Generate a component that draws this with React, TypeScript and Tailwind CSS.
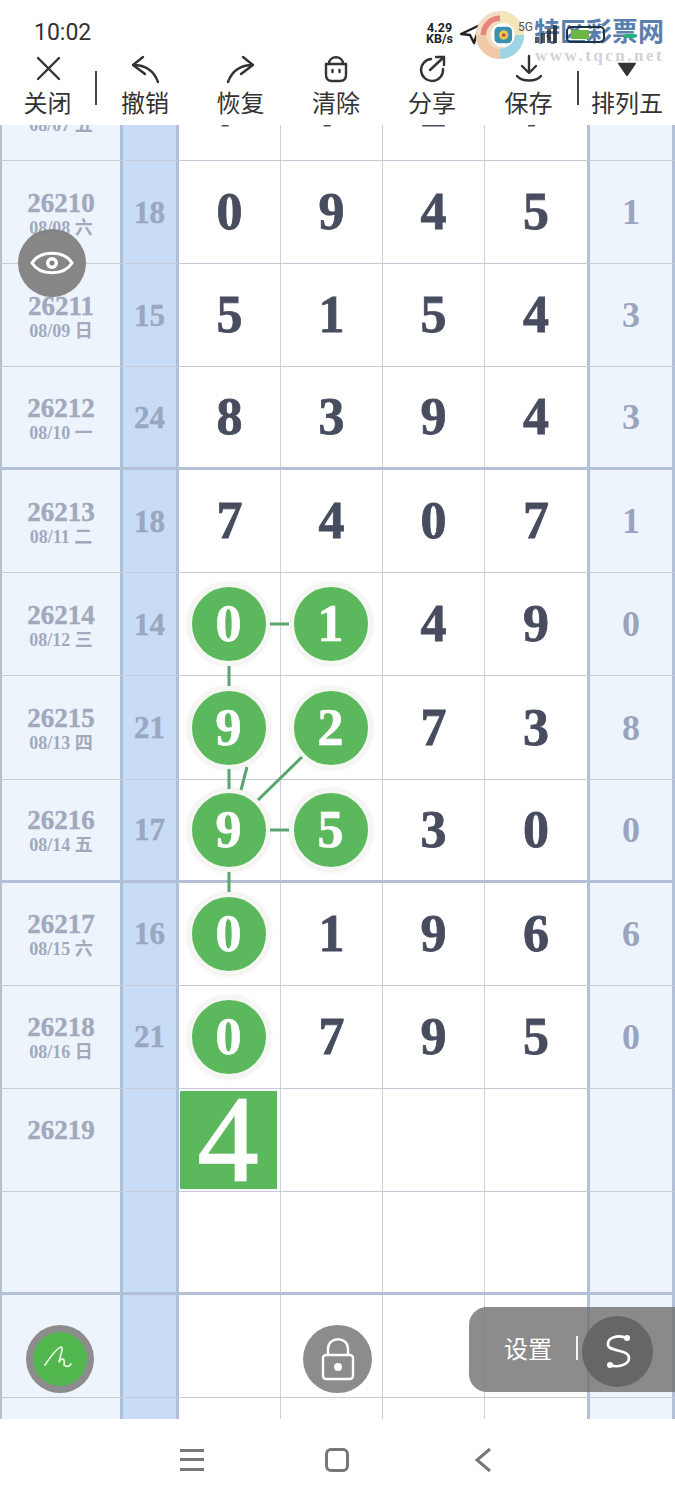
import React from "react";

const serif = "font-['Liberation_Serif','Noto_Sans_CJK_SC',serif]";

type Row = { id: string; date: string; sum: string; d: string[]; r: string; thick?: boolean; on?: number[] };
const rows: Row[] = [
  { id: "26209", date: "08/07 五", sum: "", d: ["7", "7", "2", "7"], r: "" },
  { id: "26210", date: "08/08 六", sum: "18", d: ["0", "9", "4", "5"], r: "1" },
  { id: "26211", date: "08/09 日", sum: "15", d: ["5", "1", "5", "4"], r: "3" },
  { id: "26212", date: "08/10 一", sum: "24", d: ["8", "3", "9", "4"], r: "3", thick: true },
  { id: "26213", date: "08/11 二", sum: "18", d: ["7", "4", "0", "7"], r: "1" },
  { id: "26214", date: "08/12 三", sum: "14", d: ["0", "1", "4", "9"], r: "0", on: [0, 1] },
  { id: "26215", date: "08/13 四", sum: "21", d: ["9", "2", "7", "3"], r: "8", on: [0, 1] },
  { id: "26216", date: "08/14 五", sum: "17", d: ["9", "5", "3", "0"], r: "0", on: [0, 1], thick: true },
  { id: "26217", date: "08/15 六", sum: "16", d: ["0", "1", "9", "6"], r: "6", on: [0] },
  { id: "26218", date: "08/16 日", sum: "21", d: ["0", "7", "9", "5"], r: "0", on: [0] },
  { id: "26219", date: "", sum: "", d: ["4", "", "", ""], r: "" },
  { id: "", date: "", sum: "", d: ["", "", "", ""], r: "", thick: true },
  { id: "", date: "", sum: "", d: ["", "", "", ""], r: "" },
  { id: "", date: "", sum: "", d: ["", "", "", ""], r: "" },
];

const digitWidths = ["w-[102px]", "w-[102px]", "w-[102px]", "w-[102px]"];

function Tool({ label, width, children }: { label: string; width: string; children: React.ReactNode }) {
  return (
    <div className={`${width} flex flex-col items-center`}>
      <div className="h-[30px] mt-[1px] flex items-center justify-center">{children}</div>
      <div className="text-[24px] leading-[35px] text-[#333] font-['Noto_Sans_CJK_SC',sans-serif]">{label}</div>
    </div>
  );
}

function Icon({ children, w = 32 }: { children: React.ReactNode; w?: number }) {
  return (
    <svg width={w} height={30} viewBox={`0 0 ${w} 30`} fill="none" stroke="#333" strokeWidth={2.4} strokeLinecap="round" strokeLinejoin="round">
      {children}
    </svg>
  );
}

function Header() {
  return (
    <div className="relative h-[125px] bg-white shrink-0 overflow-hidden">
      <div className="h-[53px] relative">
        <div className="absolute left-[34px] top-[18px] text-[23px] leading-[30px] text-[#333] font-['Roboto',sans-serif]">10:02</div>
        <div className="absolute left-[423px] top-[22px] w-[33px] text-center text-[12.5px] leading-[11px] font-bold text-[#222] font-['Roboto',sans-serif]">
          4.29<br />KB/s
        </div>
        <svg className="absolute left-[459px] top-[22px]" width="24" height="24" viewBox="0 0 24 24" fill="none" stroke="#222" strokeWidth="2.4" strokeLinejoin="round">
          <path d="M2 12 L21 3 L15 21 L11 13 Z" />
        </svg>
        <svg className="absolute left-[475px] top-[10px]" width="50" height="50" viewBox="0 0 54 54">
          <circle cx="27" cy="27" r="26" fill="#f3dcc2" />
          <path d="M27 1 A26 26 0 0 1 53 27 L40 27 A13 13 0 0 0 27 14 Z" fill="#f4e6b8" />
          <path d="M53 27 A26 26 0 0 1 27 53 L27 42 A15 15 0 0 0 42 27 Z" fill="#9fd3e6" />
          <path d="M27 53 A26 26 0 0 1 1 27 L12 27 A15 15 0 0 0 27 42 Z" fill="#f1c9a8" />
          <path d="M6 27 A21 21 0 0 1 27 6 L27 12 A15 15 0 0 0 12 27 Z" fill="#e8857a" />
          <circle cx="30" cy="27" r="13" fill="#fff" />
          <rect x="21" y="18" width="19" height="18" rx="5" fill="#3d8fb0" />
          <circle cx="31" cy="27" r="5" fill="#e9c84a" />
          <circle cx="31" cy="27" r="2" fill="#c0533a" />
        </svg>
        <div className="absolute left-[534px] top-[14px] text-[26px] leading-[32px] font-bold whitespace-nowrap text-[#5a7fae] font-['Noto_Sans_CJK_SC',sans-serif]">特区彩票网</div>
        <div className="absolute left-[518px] top-[20px] text-[12px] leading-[14px] text-[#555] font-['Roboto',sans-serif]">5G</div>
        <svg className="absolute left-[534px] top-[24px]" width="130" height="20" viewBox="0 0 130 20">
          <rect x="1" y="13" width="4" height="6" fill="#222" opacity="0.75" />
          <rect x="7" y="9" width="4" height="10" fill="#222" opacity="0.75" />
          <rect x="13" y="5" width="4" height="14" fill="#222" opacity="0.75" />
          <rect x="19" y="1" width="4" height="18" fill="#222" opacity="0.75" />
          <rect x="33" y="3" width="37" height="15" rx="4" fill="none" stroke="#1d3346" strokeWidth="2" />
          <rect x="37" y="6" width="18" height="9" rx="1" fill="#6fb544" />
          <rect x="90" y="10" width="12" height="4" rx="2" fill="#22b573" />
        </svg>
        <div className="absolute left-[535px] top-[46px] text-[17px] leading-[20px] font-bold tracking-[2.5px] whitespace-nowrap text-[#cfd3d9] font-['Liberation_Serif',serif]">www.tqcn.net</div>
      </div>
      <div className="flex items-start">
        <Tool label="关闭" width="w-[95px]">
          <Icon>
            <path d="M6 4 L27 25 M27 4 L6 25" />
          </Icon>
        </Tool>
        <div className="w-[2px] h-[34px] mt-[18px] bg-[#444]" />
        <Tool label="撤销" width="w-[96px]">
          <Icon>
            <path d="M4 11 L14 3 M4 11 L16 20 M4 11 C17 11 25 17 29 28" />
          </Icon>
        </Tool>
        <Tool label="恢复" width="w-[95px]">
          <Icon>
            <path d="M28 11 L18 3 M28 11 L16 20 M28 11 C15 11 7 17 3 28" />
          </Icon>
        </Tool>
        <Tool label="清除" width="w-[96px]">
          <Icon>
            <path d="M9 10 C9 1 23 1 23 10" />
            <path d="M6 10 L26 10 L26 21 C26 25 24 27 20 27 L12 27 C8 27 6 25 6 21 Z" />
            <path d="M12.5 16 L12.5 18 M19.5 16 L19.5 18" />
          </Icon>
        </Tool>
        <Tool label="分享" width="w-[96px]">
          <Icon>
            <path d="M15 5 A11 11 0 1 0 27 15" />
            <path d="M14 16 L28 3 M20 3 L28 3 L28 11" />
          </Icon>
        </Tool>
        <Tool label="保存" width="w-[97px]">
          <Icon>
            <path d="M16 2 L16 18 M9 12 L16 19 L23 12" />
            <path d="M4 22 C9 28 23 28 28 22" />
          </Icon>
        </Tool>
        <div className="w-[2px] h-[34px] mt-[18px] bg-[#444]" />
        <Tool label="排列五" width="w-[96px]">
          <svg width="20" height="18" viewBox="0 0 22 20">
            <path d="M2 4 L20 4 L11 17 Z" fill="#333" stroke="#333" strokeWidth="2" strokeLinejoin="round" />
          </svg>
        </Tool>
      </div>
    </div>
  );
}

function DigitCell({ v, width, on, box, last }: { v: string; width: string; on: boolean; box: boolean; last: boolean }) {
  return (
    <div className={`${width} h-full flex items-center justify-center ${last ? "" : "border-r border-[#ccd1da]"}`}>
      {box ? (
        <div className={`w-[97px] h-[98px] -ml-[3px] bg-[#5cb85c] flex items-center justify-center text-white text-[122px] leading-none [-webkit-text-stroke:1.5px_#ffffff] ${serif}`}>{v}</div>
      ) : on ? (
        <div className={`w-[82px] h-[82px] rounded-full bg-[#5cb85c] border-[4px] border-[#f4f7f2] shadow-[0_0_4px_#e8dfe4] -ml-[2px] flex items-center justify-center text-white text-[52px] leading-none font-bold [-webkit-text-stroke:0.7px_#ffffff] ${serif}`}>{v}</div>
      ) : (
        <span className={`text-[52px] leading-none font-bold text-[#474c5f] [-webkit-text-stroke:0.8px_#474c5f] ${serif}`}>{v}</span>
      )}
    </div>
  );
}

function TableRow({ row }: { row: Row }) {
  const line = row.thick ? "border-b-[3px] border-[#b3c0d8]" : "border-b border-[#c5ccd8]";
  const isNew = row.id === "26219";
  return (
    <div className={`flex h-[103.08px] shrink-0 ${line} ${serif}`}>
      <div className={`w-[120px] h-full border-l-2 border-[#b8c0cc] bg-[#eef4fc] flex flex-col items-center ${row.date ? "justify-center pt-[3px]" : "pt-[27px]"} text-[#a2a9bc] font-bold`}>
        <div className="text-[27px] leading-[28px] [-webkit-text-stroke:0.4px_#a2a9bc]">{row.id}</div>
        {row.date && <div className="text-[18px] leading-[22px] font-bold whitespace-nowrap">{row.date}</div>}
      </div>
      <div className="w-[59px] h-full border-x-[3px] border-[#aebfda] bg-[#c9dcf6] flex items-center justify-center pt-[2px] text-[31px] font-bold text-[#99a7c0] [-webkit-text-stroke:0.4px_#99a7c0]">
        {row.sum}
      </div>
      {row.d.map((v, i) => (
        <DigitCell key={i} v={v} width={digitWidths[i]} on={!!row.on?.includes(i)} box={isNew && i === 0} last={i === 3} />
      ))}
      <div className="w-[88px] h-full border-x-[3px] border-[#b3c0d8] bg-[#eef4fc] flex items-center justify-center text-[36px] font-bold text-[#98a5bd]">
        {row.r}
      </div>
    </div>
  );
}

function Connectors() {
  const segs = [
    [270, 624, 289, 624],
    [229, 666, 229, 686],
    [229, 769, 229, 789],
    [247, 767, 241, 790],
    [302, 757, 258, 800],
    [270, 830, 289, 830],
    [229, 872, 229, 892],
  ];
  return (
    <svg className="absolute left-0 top-0" width="675" height="1500" fill="none" stroke="#5aa56f" strokeWidth="3">
      {segs.map((s, i) => (
        <line key={i} x1={s[0]} y1={s[1]} x2={s[2]} y2={s[3]} />
      ))}
    </svg>
  );
}

function Overlays() {
  return (
    <>
      <div className="absolute left-[18px] top-[229px] w-[68px] h-[68px] rounded-full bg-[#808080]/95 flex items-center justify-center">
        <svg width="44" height="32" viewBox="0 0 44 32" fill="none" stroke="#fff" strokeWidth="3">
          <path d="M2 16 C10 3 34 3 42 16 C34 29 10 29 2 16 Z" />
          <circle cx="22" cy="16" r="6" fill="#fff" stroke="none" />
          <circle cx="22" cy="16" r="2.5" fill="#808080" stroke="none" />
        </svg>
      </div>
      <div className="absolute left-[26px] top-[1325px] w-[68px] h-[68px] rounded-full bg-[#8c8c8c] flex items-center justify-center">
        <div className="w-[54px] h-[54px] rounded-full bg-[#52b64f] flex items-center justify-center">
          <svg width="36" height="36" viewBox="0 0 36 36" fill="none" stroke="#e8f8e0" strokeWidth="1.7" strokeLinecap="round" strokeLinejoin="round">
            <path d="M3 24 C9 15 15 7 19 6 C22 6 18 16 17 21 C20 16 23 17 22 24 C24 26 27 26 29 23" />
          </svg>
        </div>
      </div>
      <div className="absolute left-[303px] top-[1325px] w-[69px] h-[68px] rounded-full bg-[#8c8c8c] flex items-center justify-center">
        <svg width="36" height="44" viewBox="0 0 36 44" fill="none" stroke="#fff" strokeWidth="2.4">
          <path d="M8 18 L8 12 C8 -1 28 -1 28 12 L28 18" />
          <rect x="3" y="18" width="30" height="24" rx="3" />
          <circle cx="18" cy="30" r="4" fill="#fff" stroke="none" />
        </svg>
      </div>
      <div className="absolute left-[469px] top-[1307px] w-[206px] h-[85px] rounded-l-[18px] bg-[#6f6f6f]/80 flex items-center">
        <span className="ml-[35px] -mt-[3px] text-[24px] leading-[30px] text-white font-['Noto_Sans_CJK_SC',sans-serif]">设置</span>
        <div className="ml-[24px] -mt-[3px] w-[2px] h-[24px] bg-white/90" />
      </div>
      <div className="absolute left-[582px] top-[1316px] w-[71px] h-[71px] rounded-full bg-[#666666] flex items-center justify-center">
        <svg width="26" height="36" viewBox="0 0 26 36" fill="none" stroke="#fff" strokeWidth="2.6" strokeLinecap="round">
          <path d="M22 4 C12 0 2 4 3 11 C4 18 24 15 24 24 C24 31 12 34 5 31" />
          <circle cx="22" cy="4" r="3" fill="#fff" stroke="none" />
          <circle cx="5" cy="31" r="3" fill="#fff" stroke="none" />
        </svg>
      </div>
    </>
  );
}

function BottomNav() {
  return (
    <div className="flex-1 bg-white flex items-center pl-[180px]">
      <div className="w-[24px] h-[24px] flex flex-col justify-between py-[1px]">
        <div className="h-[3px] bg-[#777]" />
        <div className="h-[3px] bg-[#777]" />
        <div className="h-[3px] bg-[#777]" />
      </div>
      <div className="ml-[121px] w-[24px] h-[24px] rounded-[6px] border-[3px] border-[#777]" />
      <svg className="ml-[126px]" width="17" height="26" viewBox="0 0 17 26" fill="none" stroke="#777" strokeWidth="3">
        <path d="M15 2 L2 13 L15 24" />
      </svg>
    </div>
  );
}

export default function App() {
  return (
    <div className="relative w-[675px] h-[1500px] bg-white flex flex-col overflow-hidden">
      <Header />
      <div className="h-[1294px] shrink-0 overflow-hidden bg-white">
        <div className="-mt-[67px] flex flex-col">
          {rows.map((r, i) => (
            <TableRow key={i} row={r} />
          ))}
        </div>
      </div>
      <BottomNav />
      <Connectors />
      <Overlays />
    </div>
  );
}
